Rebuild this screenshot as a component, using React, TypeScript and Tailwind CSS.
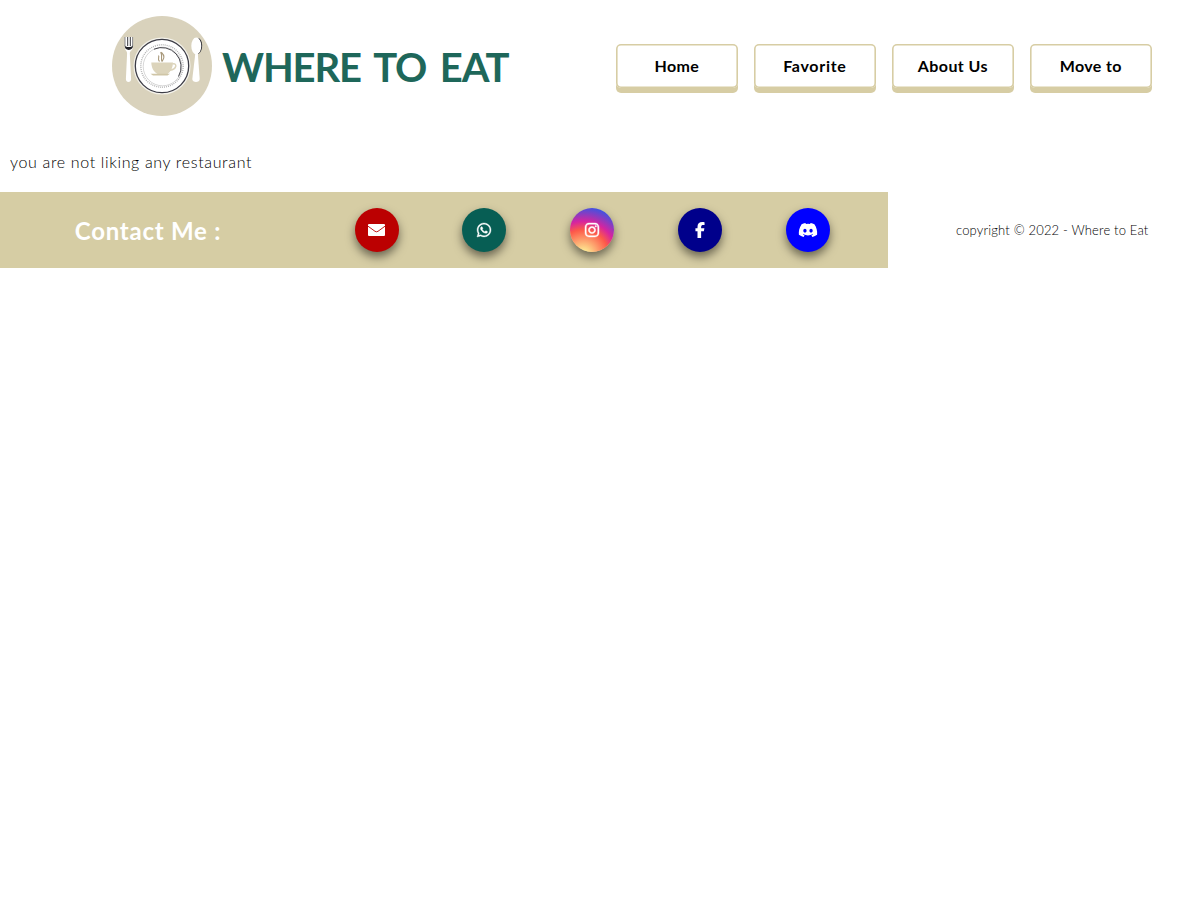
import React from "react";
import { FaWhatsapp, FaInstagram, FaFacebookF, FaDiscord } from "react-icons/fa6";

function Logo() {
  return (
    <svg viewBox="0 0 100 100" className="size-[100px] shrink-0">
      <circle cx="50" cy="50" r="50" fill="#d9d2bc" />
      <circle cx="50" cy="50" r="28.6" fill="#f4f2ea" />
      <circle cx="50" cy="50" r="26.7" fill="#fff" stroke="#3c3c46" strokeWidth="1.3" />
      <circle cx="50" cy="50" r="21.2" fill="none" stroke="#b5b5b5" strokeWidth="1.4" strokeDasharray="1 1" />
      <circle cx="50.500" cy="50.500" r="19.3" fill="#fff" stroke="#c4c4c4" strokeWidth="0.7" />
      <path d="M42 33.200A19.300 19.300 0 0 1 66.500 60.500" fill="none" stroke="#45454b" strokeWidth="1" />
      <path d="M39.300 46.500H61c-.2 5.500-2.200 9-5.500 11.500h-10c-4-2.500-6-6-6.200-11.500z" fill="#dcd4bb" />
      <path d="M60.500 48c5-1.500 4.500 5.300-2.500 6.300" fill="none" stroke="#dcd4bb" strokeWidth="1.500" />
      <path d="M38.500 57.800h19.500l-2.500 1.600h-14.500z" fill="#cfc5a6" />
      <path d="M47.500 45.500c-2.500-2.500.2-4-1-6M50 45.500c-1.500-3 .8-5-1.300-9.500M49.500 36.500c4 4 2.200 6 .5 9" fill="none" stroke="#a8987a" strokeWidth="1.100" />
      <path d="M12.700 21v9.500c0 4 2.400 4.200 2.400 7L13.900 63c-.2 4 5.400 4 5.200 0l-1.300-25.500c0-2.800 3.200-3 3.200-7V21" fill="#fff" />
      <path d="M13 21v9M20.600 21v9" fill="none" stroke="#55555a" strokeWidth=".7" />
      <path d="M15.700 21v9M18.300 21v9" fill="none" stroke="#35353a" strokeWidth="1" />
      <path d="M12.700 29.500c1.500 2 6.500 2 8.300 0 .2 2.500-1.500 4.200-4.200 4.400-2.700-.1-4.200-1.700-4.100-4.400z" fill="#202026" />
      <path d="M86 22c5 1 6 12 .5 16h-2z" fill="#25252b" />
      <ellipse cx="84.300" cy="30" rx="5" ry="8.500" fill="#fff" />
      <path d="M83.500 36h2.200l2 27c.2 4-7.600 4-7.400 0z" fill="#fff" />
    </svg>
  );
}

function Envelope({ className }: { className: string }) {
  return (
    <svg viewBox="0 0 17 12" className={className}>
      <rect width="17" height="12" rx="1" fill="currentColor" />
      <path d="M0 2.200 7 7.300q1.500 1 3 0L17 2.200" fill="none" stroke="#bb0001" strokeWidth="0.9" />
    </svg>
  );
}

const links = [
  { label: "Home", spacing: "tracking-[0.4px]" },
  { label: "Favorite", spacing: "tracking-[0.7px]" },
  { label: "About Us", spacing: "tracking-[0.4px]" },
  { label: "Move to", spacing: "tracking-[0.4px]" },
];

const contacts = [
  { name: "Email", Icon: Envelope, background: "bg-[#bb0001]", icon: "h-3 w-[17px]" },
  { name: "WhatsApp", Icon: FaWhatsapp, background: "bg-[#075e54]", icon: "size-4 stroke-white stroke-[12]" },
  {
    name: "Instagram",
    Icon: FaInstagram,
    background:
      "bg-[radial-gradient(circle_at_30%_107%,#fdf497_0%,#fdf497_5%,#fd5949_45%,#d6249f_60%,#285aeb_90%)]",
    icon: "size-4 stroke-white stroke-[14]",
  },
  { name: "Facebook", Icon: FaFacebookF, background: "bg-[#00008b]", icon: "size-4" },
  { name: "Discord", Icon: FaDiscord, background: "bg-[#0000ff]", icon: "size-5" },
];

export default function App() {
  return (
    <div className="min-h-screen bg-white font-['Lato',sans-serif] text-black">
      <header className="flex h-[132px] items-center justify-between pr-12 pl-28">
        <div className="flex items-center gap-2.5">
          <Logo />
          <h1 className="pt-0.5 text-[40px] font-bold tracking-[-1.15px] whitespace-nowrap text-[#1e675a] [word-spacing:5px]">
            WHERE TO EAT
          </h1>
        </div>
        <nav className="flex gap-[15.6px]">
          {links.map(({ label, spacing }) => (
            <a
              key={label}
              href="#"
              className={`flex h-11 w-[122.4px] items-center justify-center rounded-[5px] bg-white text-base font-bold shadow-[inset_0_0_0_1.6px_#d7cda4,0_5px_0_#d7cda4] ${spacing}`}
            >
              {label}
            </a>
          ))}
        </nav>
      </header>
      <main className="flex h-[60px] items-center px-2.5 text-base font-light tracking-[0.65px]">
        <p>you are not liking any restaurant</p>
      </main>
      <footer className="flex h-[76px] items-center">
        <div className="flex h-full w-[888px] items-center bg-[#d6cda4]">
          <h2 className="w-[296px] pt-px text-center text-2xl font-bold tracking-[0.75px] text-white">Contact Me :</h2>
          <div className="flex gap-[63.75px] pl-[58.5px]">
            {contacts.map(({ name, Icon, background, icon }) => (
              <a
                key={name}
                href="#"
                aria-label={name}
                className={`flex size-11 items-center justify-center rounded-full text-white shadow-[0_5px_10px_rgba(0,0,0,0.5)] ${background}`}
              >
                <Icon className={icon} />
              </a>
            ))}
          </div>
        </div>
        <p className="pt-0.5 pl-[68px] text-[13px] font-light tracking-[0.17px] whitespace-nowrap">
          copyright © 2022 - Where to Eat
        </p>
      </footer>
    </div>
  );
}
